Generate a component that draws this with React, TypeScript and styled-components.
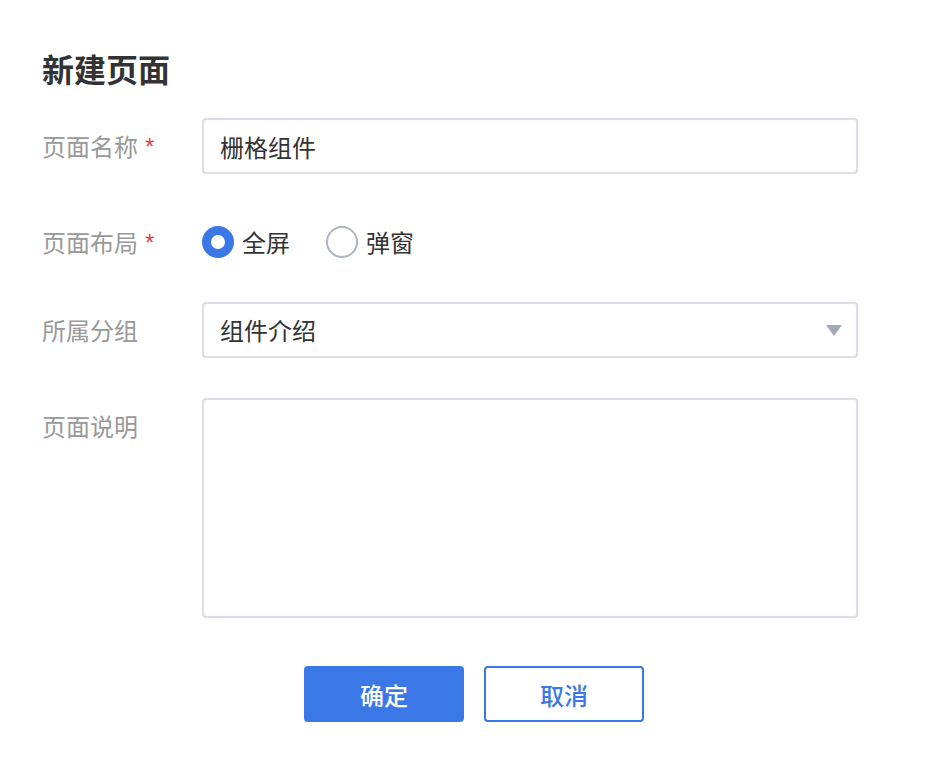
import React, { useState } from "react";
import styled, { createGlobalStyle } from "styled-components";

const Global = createGlobalStyle`
  html, body { margin: 0; padding: 0; background: #ffffff; }
  body { font-family: "Noto Sans CJK SC", "Noto Sans", sans-serif; color: #333333; }
  * { box-sizing: border-box; }
`;

const Page = styled.div`
  width: 948px;
  padding: 46px 0 40px;
`;

const Title = styled.h1`
  margin: 0 0 28px 42px;
  font-size: 32px;
  line-height: 44px;
  height: 44px;
  font-weight: 700;
  color: #333333;
`;

const Form = styled.form`
  display: flex;
  flex-direction: column;
  padding-left: 42px;
`;

const Row = styled.div<{ $gap: number; $top?: boolean }>`
  display: flex;
  align-items: ${(p) => (p.$top ? "flex-start" : "center")};
  margin-bottom: ${(p) => p.$gap}px;
`;

const Label = styled.label`
  width: 160px;
  height: 56px;
  flex: none;
  display: flex;
  align-items: center;
  font-size: 24px;
  line-height: 1;
  color: #999999;
  white-space: nowrap;
`;

const Star = styled.span`
  margin-left: 7px;
  color: #e0453d;
  font-family: "Liberation Sans", sans-serif;
  font-size: 24px;
  line-height: 1;
  position: relative;
  top: 1px;
`;

const Field = styled.div`
  width: 656px;
  height: 56px;
  border: 2px solid #dcdfe6;
  border-radius: 4px;
  display: flex;
  align-items: center;
  padding: 0 14px 0 16px;
  font-size: 24px;
  line-height: 1;
  color: #333333;
`;

const TextInput = styled.input`
  flex: 1;
  border: none;
  outline: none;
  padding: 0;
  font: inherit;
  color: inherit;
  background: transparent;
`;

const SelectField = styled(Field)`
  justify-content: space-between;
  cursor: pointer;
`;

const Caret = styled.span`
  width: 0;
  height: 0;
  border-left: 8px solid transparent;
  border-right: 8px solid transparent;
  border-top: 11px solid #a3a9b8;
`;

const TextArea = styled.textarea`
  display: block;
  width: 656px;
  height: 220px;
  border: 2px solid #dcdfe6;
  border-radius: 4px;
  resize: none;
  outline: none;
  padding: 12px 16px;
  font: inherit;
  font-size: 24px;
  color: #333333;
`;

const RadioGroup = styled.div`
  display: flex;
  align-items: center;
  height: 56px;
`;

const RadioItem = styled.label`
  display: flex;
  align-items: center;
  margin-right: 36px;
  font-size: 24px;
  line-height: 1;
  color: #333333;
  cursor: pointer;
`;

const RadioCircle = styled.span<{ $checked: boolean }>`
  width: 32px;
  height: 32px;
  border-radius: 50%;
  background: #ffffff;
  border: ${(p) => (p.$checked ? "9px solid #3b78e7" : "2px solid #adb3c2")};
  margin-right: 8px;
  flex: none;
`;

const Actions = styled.div`
  display: flex;
  justify-content: center;
  gap: 20px;
`;

const Button = styled.button<{ $primary?: boolean }>`
  width: 160px;
  height: 56px;
  border-radius: 4px;
  border: 2px solid #3b78e7;
  background: ${(p) => (p.$primary ? "#3b78e7" : "#ffffff")};
  color: ${(p) => (p.$primary ? "#ffffff" : "#3b78e7")};
  font-family: "Noto Sans CJK SC", sans-serif;
  font-size: 24px;
  font-weight: 500;
  cursor: pointer;
`;

export default function App() {
  const [layout, setLayout] = useState("full");
  const [name, setName] = useState("栅格组件");
  return (
    <Page>
      <Global />
      <Title>新建页面</Title>
      <Form onSubmit={(e) => e.preventDefault()}>
        <Row $gap={40}>
          <Label>
            页面名称<Star>*</Star>
          </Label>
          <Field>
            <TextInput value={name} onChange={(e) => setName(e.target.value)} />
          </Field>
        </Row>
        <Row $gap={32}>
          <Label>
            页面布局<Star>*</Star>
          </Label>
          <RadioGroup>
            <RadioItem onClick={() => setLayout("full")}>
              <RadioCircle $checked={layout === "full"} />
              全屏
            </RadioItem>
            <RadioItem onClick={() => setLayout("popup")}>
              <RadioCircle $checked={layout === "popup"} />
              弹窗
            </RadioItem>
          </RadioGroup>
        </Row>
        <Row $gap={40}>
          <Label>所属分组</Label>
          <SelectField>
            <span>组件介绍</span>
            <Caret />
          </SelectField>
        </Row>
        <Row $gap={48} $top>
          <Label>页面说明</Label>
          <TextArea />
        </Row>
      </Form>
      <Actions>
        <Button $primary type="button">确定</Button>
        <Button type="button">取消</Button>
      </Actions>
    </Page>
  );
}
